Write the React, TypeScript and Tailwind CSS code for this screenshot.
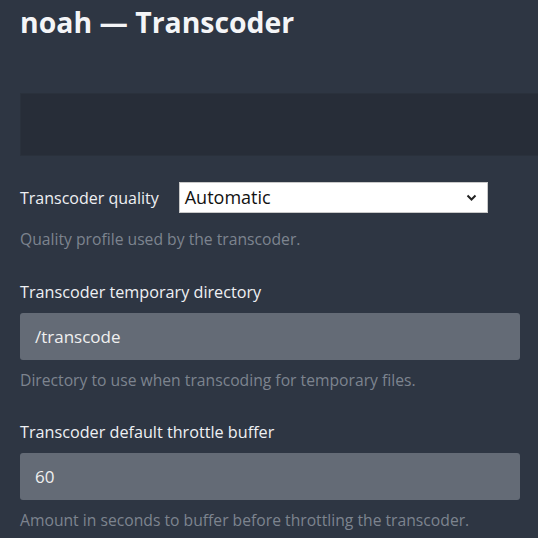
import { FC } from 'react';

const Help: FC<{ children: string }> = ({ children }) => (
  <p className="text-[15.7px] leading-5 text-[#7d848f]">{children}</p>
);

const TextField: FC<{ label: string; value: string; help: string }> = ({ label, value, help }) => (
  <div className="flex flex-col">
    <label className="text-[16.2px] leading-5 text-[#eef0f3]">{label}</label>
    <div className="mt-[11px] h-[47px] w-[500px] rounded-[3px] bg-[#646b76] px-[15px] flex items-center text-[17px] text-[#f0f0f0]">
      {value}
    </div>
    <div className="mt-[10px]">
      <Help>{help}</Help>
    </div>
  </div>
);

export default function App() {
  return (
    <div
      className="h-[538px] w-[538px] overflow-hidden bg-[#2e3643] pl-5"
      style={{ fontFamily: '"Open Sans", "Noto Sans", sans-serif' }}
    >
      <h1 className="pt-[3px] text-[28.4px] leading-[38px] font-bold text-[#f4f5f7]">
        noah — Transcoder
      </h1>

      <div className="mt-[52px] h-[63px] -mr-2 border border-[#2a313c] bg-[#272d38]" />

      <div className="mt-[26px] flex items-center gap-[20px]">
        <span className="text-[16px] leading-5 text-[#eef0f3]">Transcoder quality</span>
        <div className="h-[31px] w-[309px] bg-white border border-[#c9c9c9] flex items-center justify-between pl-[5px] pr-[10px]">
          <span className="text-[18px] text-[#111]">Automatic</span>
          <svg width="11" height="8" viewBox="0 0 11 8" className="mt-[1px]">
            <path d="M1.5 1.5 L5.5 5.5 L9.5 1.5" fill="none" stroke="#222" strokeWidth="2" />
          </svg>
        </div>
      </div>
      <div className="mt-[16px]">
        <Help>Quality profile used by the transcoder.</Help>
      </div>

      <div className="mt-[33px] flex flex-col gap-[32px]">
        <TextField
          label="Transcoder temporary directory"
          value="/transcode"
          help="Directory to use when transcoding for temporary files."
        />
        <TextField
          label="Transcoder default throttle buffer"
          value="60"
          help="Amount in seconds to buffer before throttling the transcoder."
        />
      </div>
    </div>
  );
}
